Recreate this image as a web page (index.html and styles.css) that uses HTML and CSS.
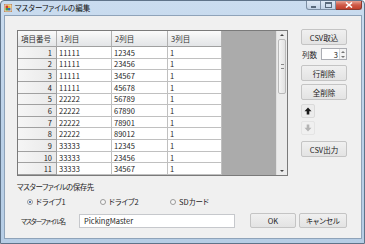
FILE: index.html
```html
<!DOCTYPE html>
<html lang="ja">
<head>
  <meta charset="UTF-8">
  <title>マスターファイルの編集</title>
  <link rel="stylesheet" href="styles.css">
</head>
<body>
  <div class="window">
    <div class="titlebar">
      <svg class="app-icon" width="8" height="8" viewBox="0 0 8 8">
        <rect x="0" y="0" width="8" height="8" fill="#f4e6c8" stroke="#b07040" stroke-width="1"/>
        <rect x="1.5" y="1.5" width="2.5" height="2.5" fill="#d23c2c"/>
        <rect x="4" y="1.5" width="2.5" height="2.5" fill="#e8b830"/>
        <rect x="1.5" y="4" width="2.5" height="2.5" fill="#4a9a3a"/>
        <rect x="4" y="4" width="2.5" height="2.5" fill="#3a6ac0"/>
      </svg>
      <span class="title">マスターファイルの編集</span>
      <div class="caption">
        <span class="cap cap-min"><i></i></span>
        <span class="cap cap-max"><i></i></span>
        <span class="cap cap-close">
          <svg width="8" height="6" viewBox="0 0 8 6"><path d="M1 0.5 L7 5.5 M7 0.5 L1 5.5" stroke="#fff" stroke-width="1.6"/></svg>
        </span>
      </div>
    </div>

    <div class="client">
      <div class="main">
        <div class="grid">
          <div class="table">
            <div class="th">項目番号</div>
            <div class="th">1列目</div>
            <div class="th">2列目</div>
            <div class="th">3列目</div>

            <div class="rh">1</div><div class="td">11111</div><div class="td">12345</div><div class="td">1</div>
            <div class="rh">2</div><div class="td">11111</div><div class="td">23456</div><div class="td">1</div>
            <div class="rh">3</div><div class="td">11111</div><div class="td">34567</div><div class="td">1</div>
            <div class="rh">4</div><div class="td">11111</div><div class="td">45678</div><div class="td">1</div>
            <div class="rh">5</div><div class="td">22222</div><div class="td">56789</div><div class="td">1</div>
            <div class="rh">6</div><div class="td">22222</div><div class="td">67890</div><div class="td">1</div>
            <div class="rh">7</div><div class="td">22222</div><div class="td">78901</div><div class="td">1</div>
            <div class="rh">8</div><div class="td">22222</div><div class="td">89012</div><div class="td">1</div>
            <div class="rh">9</div><div class="td">33333</div><div class="td">12345</div><div class="td">1</div>
            <div class="rh">10</div><div class="td">33333</div><div class="td">23456</div><div class="td">1</div>
            <div class="rh">11</div><div class="td">33333</div><div class="td">34567</div><div class="td">1</div>
          </div>
          <div class="empty"></div>
          <div class="vscroll">
            <div class="sb-arrow"><span class="tri-up"></span></div>
            <div class="sb-thumb"><span class="grip"></span></div>
            <div class="sb-track"></div>
            <div class="sb-arrow"><span class="tri-down"></span></div>
          </div>
        </div>

        <div class="side">
          <button class="btn">CSV取込</button>
          <div class="cols-row">
            <span class="cols-label">列数</span>
            <div class="spin">
              <span class="spin-value">3</span>
              <span class="spin-arrows">
                <span class="spin-up"><span class="tri-up small"></span></span>
                <span class="spin-down"><span class="tri-down small"></span></span>
              </span>
            </div>
          </div>
          <button class="btn">行削除</button>
          <button class="btn">全削除</button>
          <button class="btn-icon">
            <svg width="8" height="8" viewBox="0 0 8 8"><path d="M4 0.5 L7.5 4.2 L5.3 4.2 L5.3 7.5 L2.7 7.5 L2.7 4.2 L0.5 4.2 Z" fill="#1a1a1a"/></svg>
          </button>
          <button class="btn-icon disabled">
            <svg width="8" height="8" viewBox="0 0 8 8"><path d="M4 7.5 L7.5 3.8 L5.3 3.8 L5.3 0.5 L2.7 0.5 L2.7 3.8 L0.5 3.8 Z" fill="#b4b4b4"/></svg>
          </button>
          <button class="btn btn-out">CSV出力</button>
        </div>
      </div>

      <div class="dest-label">マスターファイルの保存先</div>
      <div class="radios">
        <label class="radio"><span class="dot checked"></span>ドライブ1</label>
        <label class="radio"><span class="dot"></span>ドライブ2</label>
        <label class="radio"><span class="dot"></span>SDカード</label>
      </div>

      <div class="name-row">
        <span class="name-label">マスターファイル名</span>
        <div class="textbox">PickingMaster</div>
        <button class="btn btn-ok">OK</button>
        <button class="btn btn-cancel">キャンセル</button>
      </div>
    </div>
  </div>
</body>
</html>
```

FILE: styles.css
```css
body {
  margin: 0;
  font-family: "Noto Sans CJK JP", "Noto Sans", sans-serif;
  font-size: 7.5px;
  font-feature-settings: "palt";
  color: #1e1e1e;
  background: #fff;
}
.window {
  width: 365px;
  height: 244px;
  box-sizing: border-box;
  border: 1px solid #5f7389;
  border-radius: 4px 4px 0 0;
  background: linear-gradient(#cadcef, #bad0e7 60%, #b6cde5);
  display: flex;
  flex-direction: column;
}
.titlebar {
  height: 14px;
  display: flex;
  align-items: flex-start;
}
.app-icon {
  margin: 3px 0 0 3px;
}
.title {
  margin: 1px 0 0 3px;
  line-height: 12px;
  color: #111;
}
.caption {
  margin-left: auto;
  margin-right: 2px;
  display: flex;
}
.cap {
  height: 9px;
  box-sizing: border-box;
  border: 1px solid #7c8ea3;
  border-top: none;
  background: linear-gradient(#dfe9f5, #c3d3e6);
  display: flex;
  align-items: center;
  justify-content: center;
}
.cap-min {
  width: 15px;
  border-radius: 0 0 0 3px;
}
.cap-min i {
  width: 5px;
  height: 2px;
  background: #5a6a7c;
  margin-top: 3px;
}
.cap-max {
  width: 15px;
  border-left: none;
}
.cap-max i {
  width: 5px;
  height: 3px;
  border: 1px solid #5a6a7c;
  border-top-width: 2px;
}
.cap-close {
  width: 26px;
  border-left: none;
  border-color: #8a3a30;
  border-radius: 0 0 3px 0;
  background: linear-gradient(#e8a293, #cf5a48 50%, #c2402c);
}

.client {
  margin: 0 2px 4px 3px;
  flex: 1;
  background: #f0f0f0;
  border: 1px solid #8fa3b9;
  padding: 13px 0 0 12px;
}
.main {
  display: flex;
  align-items: flex-start;
}
.grid {
  margin-top: 1px;
  width: 271px;
  height: 146px;
  box-sizing: border-box;
  border: 1px solid #7a7a7a;
  display: flex;
  background: #ababab;
}
.table {
  width: 204px;
  height: 144px;
  display: grid;
  grid-template-columns: 39px 55px 56px 54px;
  grid-template-rows: 16px repeat(11, 1fr);
  background: #fff;
}
.th, .rh, .td {
  box-sizing: border-box;
  border-right: 1px solid #a0a0a0;
  border-bottom: 1px solid #a0a0a0;
  display: flex;
  align-items: center;
  white-space: nowrap;
  overflow: hidden;
}
.th {
  background: linear-gradient(#fbfbfb, #eeeff0 50%, #e3e5e7);
  border-color: #c8c8c8 #b0b0b0 #a0a0a0 #c8c8c8;
  padding-left: 3px;
  color: #333;
}
.rh {
  background: linear-gradient(90deg, #f5f5f5, #e9e9e9);
  justify-content: flex-end;
  padding-right: 4px;
}
.td {
  padding-left: 2px;
  border-color: #c0c0c0;
}
.empty {
  flex: 1;
  background: #ababab;
}
.vscroll {
  width: 10px;
  background: #ebebeb;
  border-left: 1px solid #e0e0e0;
  display: flex;
  flex-direction: column;
}
.sb-arrow {
  height: 8px;
  display: flex;
  align-items: center;
  justify-content: center;
}
.sb-thumb {
  height: 53px;
  margin: 0 1px;
  border: 1px solid #b9b9b9;
  border-radius: 2px;
  background: linear-gradient(90deg, #f4f4f4, #e2e2e2);
  display: flex;
  align-items: center;
  justify-content: center;
}
.grip {
  width: 3px;
  height: 3px;
  border-top: 1px solid #888;
  border-bottom: 1px solid #888;
}
.sb-track {
  flex: 1;
}
.tri-up, .tri-down {
  width: 0;
  height: 0;
  border-left: 2px solid transparent;
  border-right: 2px solid transparent;
}
.tri-up {
  border-bottom: 2px solid #444;
}
.tri-down {
  border-top: 2px solid #444;
}
.tri-up.small {
  border-bottom-color: #777;
}
.tri-down.small {
  border-top-color: #777;
}

.side {
  margin-left: 13px;
  width: 46px;
  display: flex;
  flex-direction: column;
  align-items: flex-start;
}
.btn {
  font: inherit;
  font-feature-settings: "palt";
  color: #222;
  padding: 0;
  width: 46px;
  height: 16px;
  box-sizing: border-box;
  border: 1px solid #c4c4c4;
  border-radius: 2px;
  background: linear-gradient(#f0f0f0, #e3e3e3);
  white-space: nowrap;
}
.cols-row {
  margin-top: 3px;
  width: 46px;
  height: 12px;
  display: flex;
  align-items: center;
}
.cols-label {
  margin-left: 1px;
}
.spin {
  margin-left: auto;
  width: 26px;
  height: 12px;
  box-sizing: border-box;
  border: 1px solid #abadb3;
  background: #fff;
  display: flex;
  align-items: center;
}
.spin-value {
  flex: 1;
  text-align: right;
  padding-right: 1px;
}
.spin-arrows {
  width: 6px;
  height: 10px;
  display: flex;
  flex-direction: column;
  border-left: 1px solid #d8d8d8;
}
.spin-up, .spin-down {
  flex: 1;
  display: flex;
  align-items: center;
  justify-content: center;
  background: #f3f3f3;
}
.cols-row + .btn {
  margin-top: 5px;
}
.btn + .btn {
  margin-top: 3px;
}
.btn-icon {
  margin-top: 4px;
  padding: 0;
  width: 14px;
  height: 14px;
  border: 1px solid #dadada;
  border-radius: 2px;
  background: #ececec;
  display: flex;
  align-items: center;
  justify-content: center;
}
.btn-icon + .btn-icon {
  margin-top: 3px;
}
.btn-icon.disabled {
  background: #f0f0f0;
  border-color: #e4e4e4;
}
.btn-out {
  margin-top: 6px;
}

.dest-label {
  margin-top: 5px;
  line-height: 11px;
  letter-spacing: -0.5px;
}
.radios {
  margin-top: 4px;
  height: 11px;
  display: flex;
  align-items: center;
  padding-left: 10px;
}
.radio {
  display: flex;
  align-items: center;
  width: 73px;
  white-space: nowrap;
}
.radio + .radio {
  width: 70px;
}
.dot {
  width: 6px;
  height: 6px;
  box-sizing: border-box;
  border: 1px solid #9a9a9a;
  border-radius: 50%;
  background: #f6f6f6;
  margin-right: 3px;
  display: flex;
  align-items: center;
  justify-content: center;
}
.dot.checked::after {
  content: "";
  width: 2px;
  height: 2px;
  border-radius: 50%;
  background: #1f4f9a;
}
.name-row {
  margin-top: 6px;
  display: flex;
  align-items: center;
  height: 15px;
}
.name-label {
  margin-left: 4px;
  width: 58px;
  font-size: 6.8px;
  letter-spacing: -1.2px;
  white-space: nowrap;
}
.textbox {
  width: 156px;
  height: 14px;
  box-sizing: border-box;
  border: 1px solid #c6c8cc;
  background: #fff;
  padding-left: 4px;
  display: flex;
  align-items: center;
}
.btn-ok {
  margin-left: 15px;
  width: 46px;
  height: 15px;
}
.btn.btn-cancel {
  margin-top: 0;
  margin-left: 3px;
  width: 48px;
  height: 15px;
}
```
